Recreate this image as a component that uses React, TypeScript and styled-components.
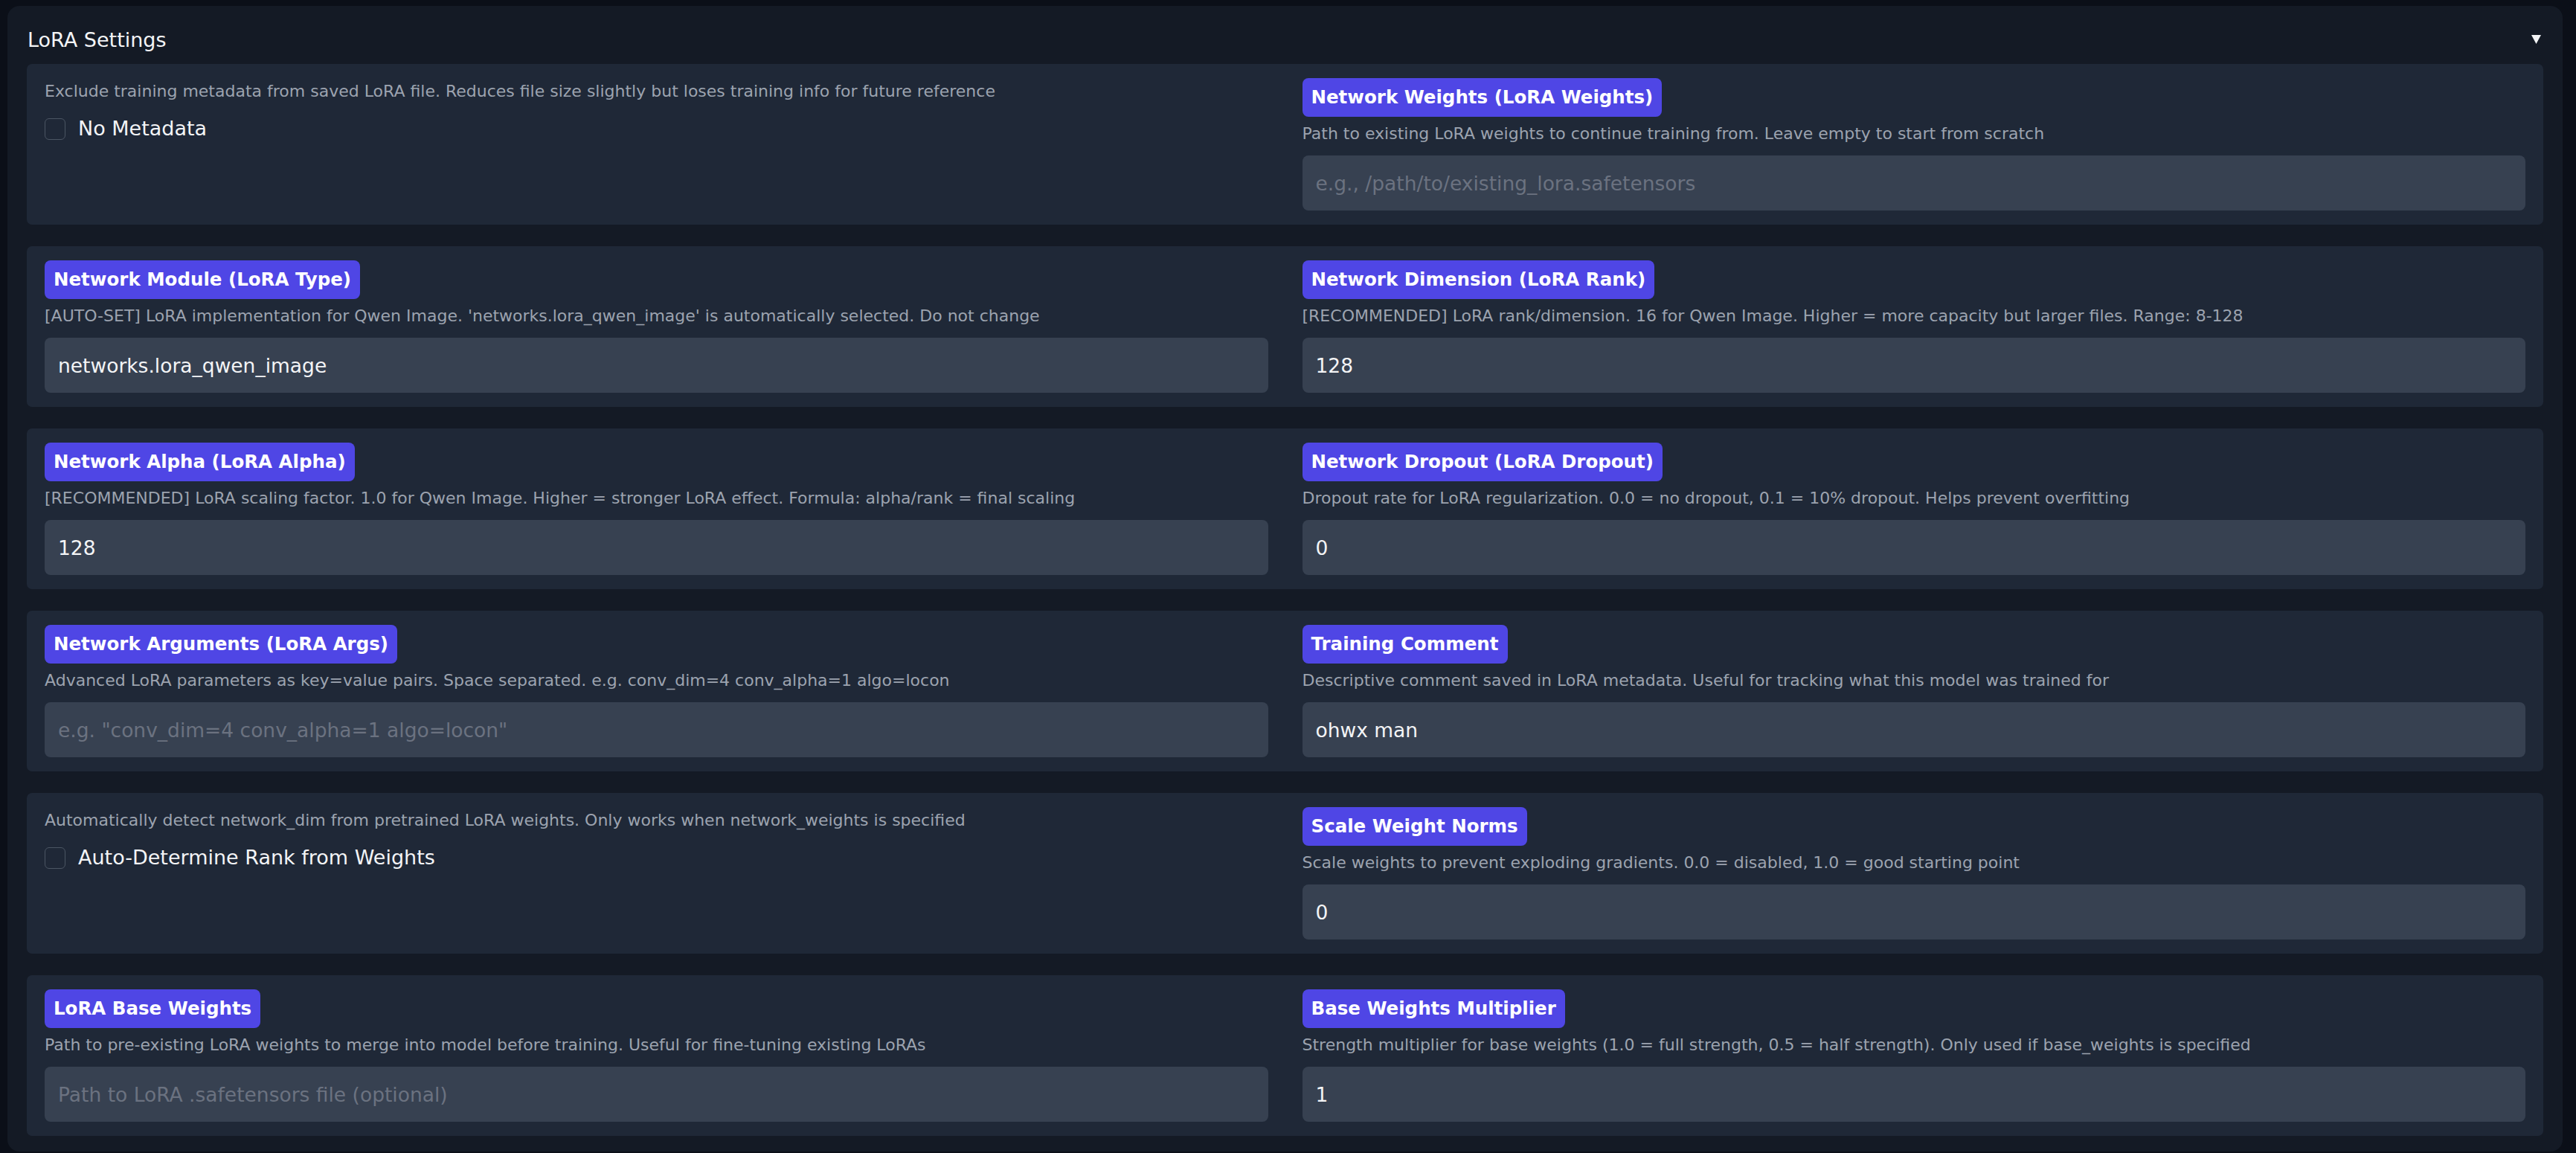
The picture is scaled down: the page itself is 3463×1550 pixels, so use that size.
import styled, { createGlobalStyle } from 'styled-components'

const GlobalStyle = createGlobalStyle`
    html, body {
        margin: 0;
        padding: 0;
        background: #0b0f18;
    }
    body {
        font-family: 'DejaVu Sans', 'Open Sans', sans-serif;
    }
    * {
        box-sizing: border-box;
    }
`

const Panel = styled.section`
    margin: 8px 18px 0 10px;
    padding: 26px 26px 21px 26px;
    background: #141a25;
    border-radius: 16px;
`
const Header = styled.div`
    display: flex;
    align-items: center;
    justify-content: space-between;
    height: 38px;
    margin-bottom: 14px;
    padding: 0 1px;
`
const Title = styled.h2`
    margin: 0;
    font-size: 27px;
    font-weight: 400;
    color: #f3f4f6;
`
const Arrow = styled.svg`
    width: 13px;
    height: 12px;
    margin-right: 2px;
`
const Stack = styled.div`
    display: flex;
    flex-direction: column;
    gap: 29px;
`
const Card = styled.div`
    display: grid;
    grid-template-columns: 1fr 1fr;
    column-gap: 46px;
    padding: 19px 24px;
    background: #1f2837;
    border-radius: 7px;
`
const Field = styled.div`
    display: flex;
    flex-direction: column;
    align-items: flex-start;
    min-width: 0;
`
const Badge = styled.span`
    display: inline-block;
    padding: 10px 12px;
    line-height: 32px;
    font-size: 24.5px;
    font-weight: 700;
    color: #ffffff;
    background: #4f46e5;
    border-radius: 8px;
    white-space: nowrap;
`
const Hint = styled.p<{ $top?: number }>`
    margin: ${p => p.$top ?? 8}px 0 14px;
    font-size: 22px;
    line-height: 30px;
    color: #9ca3af;
    white-space: nowrap;
`
const Input = styled.input`
    width: 100%;
    height: 74px;
    padding: 0 18px;
    border: none;
    border-radius: 8px;
    background: #374151;
    color: #f3f4f6;
    font-family: inherit;
    font-size: 26.5px;
    outline: none;
    &::placeholder {
        color: #6b7280;
    }
`
const CheckRow = styled.label`
    display: flex;
    align-items: center;
    gap: 17px;
    margin-top: 6px;
    font-size: 27px;
    line-height: 30px;
    color: #f3f4f6;
`
const Box = styled.input`
    appearance: none;
    margin: 0;
    width: 28px;
    height: 29px;
    border: 1.5px solid #4b5563;
    border-radius: 6px;
    background: transparent;
`

type Text = {
    label: string
    hint: string
    value?: string
    placeholder?: string
}

type Check = {
    check: string
    hint: string
}

type Item = Text | Check

const rows: [Item, Item][] = [
    [
        {
            check: 'No Metadata',
            hint: 'Exclude training metadata from saved LoRA file. Reduces file size slightly but loses training info for future reference'
        },
        {
            label: 'Network Weights (LoRA Weights)',
            hint: 'Path to existing LoRA weights to continue training from. Leave empty to start from scratch',
            placeholder: 'e.g., /path/to/existing_lora.safetensors'
        }
    ],
    [
        {
            label: 'Network Module (LoRA Type)',
            hint: "[AUTO-SET] LoRA implementation for Qwen Image. 'networks.lora_qwen_image' is automatically selected. Do not change",
            value: 'networks.lora_qwen_image'
        },
        {
            label: 'Network Dimension (LoRA Rank)',
            hint: '[RECOMMENDED] LoRA rank/dimension. 16 for Qwen Image. Higher = more capacity but larger files. Range: 8-128',
            value: '128'
        }
    ],
    [
        {
            label: 'Network Alpha (LoRA Alpha)',
            hint: '[RECOMMENDED] LoRA scaling factor. 1.0 for Qwen Image. Higher = stronger LoRA effect. Formula: alpha/rank = final scaling',
            value: '128'
        },
        {
            label: 'Network Dropout (LoRA Dropout)',
            hint: 'Dropout rate for LoRA regularization. 0.0 = no dropout, 0.1 = 10% dropout. Helps prevent overfitting',
            value: '0'
        }
    ],
    [
        {
            label: 'Network Arguments (LoRA Args)',
            hint: 'Advanced LoRA parameters as key=value pairs. Space separated. e.g. conv_dim=4 conv_alpha=1 algo=locon',
            placeholder: 'e.g. "conv_dim=4 conv_alpha=1 algo=locon"'
        },
        {
            label: 'Training Comment',
            hint: 'Descriptive comment saved in LoRA metadata. Useful for tracking what this model was trained for',
            value: 'ohwx man'
        }
    ],
    [
        {
            check: 'Auto-Determine Rank from Weights',
            hint: 'Automatically detect network_dim from pretrained LoRA weights. Only works when network_weights is specified'
        },
        {
            label: 'Scale Weight Norms',
            hint: 'Scale weights to prevent exploding gradients. 0.0 = disabled, 1.0 = good starting point',
            value: '0'
        }
    ],
    [
        {
            label: 'LoRA Base Weights',
            hint: 'Path to pre-existing LoRA weights to merge into model before training. Useful for fine-tuning existing LoRAs',
            placeholder: 'Path to LoRA .safetensors file (optional)'
        },
        {
            label: 'Base Weights Multiplier',
            hint: 'Strength multiplier for base weights (1.0 = full strength, 0.5 = half strength). Only used if base_weights is specified',
            value: '1'
        }
    ]
]

function SettingField ({ item }: { item: Item }) {
    if ('check' in item) {
        return (
            <Field>
                <Hint $top={3}>{item.hint}</Hint>
                <CheckRow>
                    <Box type='checkbox' />
                    {item.check}
                </CheckRow>
            </Field>
        )
    }
    return (
        <Field>
            <Badge>{item.label}</Badge>
            <Hint>{item.hint}</Hint>
            <Input
                type='text'
                defaultValue={item.value}
                placeholder={item.placeholder}
            />
        </Field>
    )
}

function App () {
    return (
        <>
            <GlobalStyle />
            <Panel>
                <Header>
                    <Title>LoRA Settings</Title>
                    <Arrow viewBox='0 0 13 12'>
                        <polygon points='0,0 13,0 6.5,12' fill='#f3f4f6' />
                    </Arrow>
                </Header>
                <Stack>
                    {rows.map((pair, i) => (
                        <Card key={i}>
                            <SettingField item={pair[0]} />
                            <SettingField item={pair[1]} />
                        </Card>
                    ))}
                </Stack>
            </Panel>
        </>
    )
}

export default App
